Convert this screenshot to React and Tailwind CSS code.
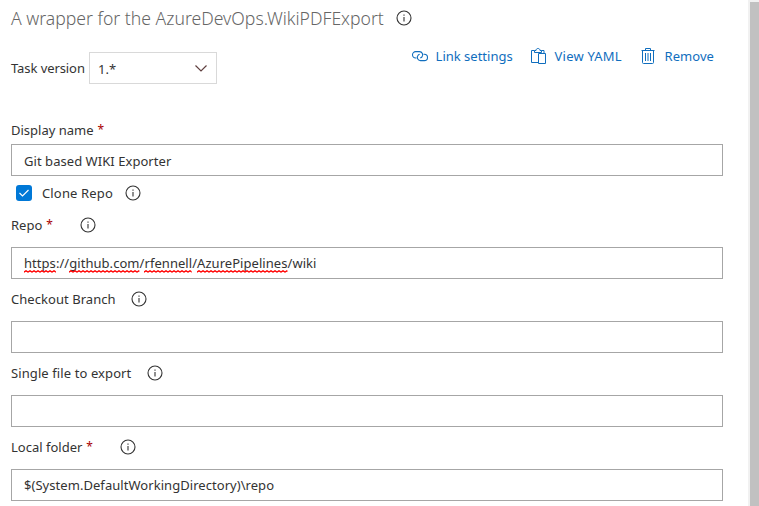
const FONT = "font-['Noto_Sans','Open_Sans',sans-serif]";

function Info({ className = "" }) {
  return (
    <svg className={`shrink-0 ${className}`} width="16" height="16" viewBox="0 0 16 16" fill="none" stroke="#333">
      <circle cx="8" cy="8" r="7" strokeWidth="1.1" />
      <path d="M8 7v4.5M8 4.5v1.2" strokeWidth="1.1" />
    </svg>
  );
}

function LinkIcon() {
  return (
    <svg width="18" height="16" viewBox="0 0 18 16" fill="none" stroke="#106ebe" strokeWidth="1.1">
      <path d="M5.500 10h-.8a3.200 3.200 0 0 1 0-6.400h3.800a3.200 3.200 0 0 1 2.500 5.200q-.6.800-1.700 1.100" />
      <path d="M12.500 6.200h.8a3.200 3.200 0 0 1 0 6.400h-3.800a3.200 3.200 0 0 1-2.500-5.200q.6-.8 1.700-1.100" />
    </svg>
  );
}

function ClipboardIcon() {
  return (
    <svg width="16" height="18" viewBox="0 0 16 18" fill="none" stroke="#106ebe">
      <path d="M7 15.500H.5v-12h3M10.500 3.500h2.500v3M3.500 5.500v-2h1.500c0-2.700 4-2.700 4 0h1.500v2zM7.500 6.500h7v10h-7z" />
    </svg>
  );
}

function TrashIcon() {
  return (
    <svg width="14" height="18" viewBox="0 0 14 18" fill="none" stroke="#106ebe">
      <path d="M.5 3.500h13M4.500 3.500v-2h5v2M1.500 3.500v12q0 1 1 1h9q1 0 1-1v-12M4.500 6v8M7 6v8M9.500 6v8" />
    </svg>
  );
}

function Label({ text, required, tracking = "", gap = "", info = true }) {
  return (
    <div className="flex h-5 items-center">
      <span className={`whitespace-pre ${tracking}`}>{text}</span>
      {required && <span className="ml-1 w-1.5 text-[12px] text-[#a80000]">*</span>}
      {info && <Info className={gap} />}
    </div>
  );
}

function Field({ children }) {
  return (
    <div className="flex h-8 w-[712px] items-center border border-[#a6a6a6] bg-white pl-3 tracking-[0.05px] whitespace-pre">
      {children}
    </div>
  );
}

function Misspelled({ children }) {
  return (
    <span className="relative inline-block">
      {children}
      <svg className="absolute bottom-0 left-0 h-[3px] w-full">
        <defs>
          <pattern id="squiggle" width="4" height="3" patternUnits="userSpaceOnUse">
            <path d="M-1 3L0 2L2 .800L4 2L5 3" fill="none" stroke="#f00" strokeWidth="1.400" />
          </pattern>
        </defs>
        <rect width="100%" height="3" fill="url(#squiggle)" />
      </svg>
    </span>
  );
}

export default function App() {
  return (
    <div className={`flex h-[506px] w-[759px] overflow-hidden bg-white text-[13px] leading-5 text-[#333] ${FONT}`}>
      <main className="flex w-[748px] shrink-0 flex-col pl-[11px]">
        <header className="flex h-9 items-center">
          <h1 className="w-[373px] text-[17.6px] font-light whitespace-pre text-[#666]">A wrapper for the AzureDevOps.WikiPDFExport</h1>
          <Info className="ml-3" />
        </header>
        <div className="flex h-[84px] w-[712px] justify-between">
          <div className="mt-4 flex h-8 items-center">
            <span className="w-[78px] tracking-[-0.08px] whitespace-pre">Task version</span>
            <div className="flex h-8 w-32 items-center justify-between border border-[#d9d9d9] pr-2 pl-2">
              <span className="pt-0.5">1.*</span>
              <svg width="14" height="8" viewBox="0 0 14 8" fill="none" stroke="#604040" strokeWidth="1.2">
                <path d="M1.500 1.500l5.500 5.500 5.500-5.500" />
              </svg>
            </div>
          </div>
          <div className="mt-[10px] flex h-5 items-center pr-[9px] text-[#106ebe]">
            <LinkIcon />
            <span className="ml-[7px] w-[95px]">Link settings</span>
            <ClipboardIcon />
            <span className="ml-2 w-[86px] tracking-[0.2px]">View YAML</span>
            <TrashIcon />
            <span className="ml-[10px] tracking-[0.05px]">Remove</span>
          </div>
        </div>
        <Label text="Display name" required info={false} />
        <div className="mt-1">
          <Field><span className="pt-0.5">Git based WIKI Exporter</span></Field>
        </div>
        <div className="mt-[7px] flex h-5 items-center pl-[5px]">
          <span className="flex size-4 items-center justify-center rounded-[3px] bg-[#0078d7]">
            <svg width="12" height="10" viewBox="0 0 12 10" fill="none" stroke="#fff" strokeWidth="1.1">
              <path d="M1.500 5l3 3 6-6" />
            </svg>
          </span>
          <span className="ml-[10px] tracking-[0.15px]">Clone Repo</span>
          <Info className="ml-3" />
        </div>
        <div className="mt-3">
          <Label text="Repo" required gap="ml-7" />
        </div>
        <div className="mt-3">
          <Field>
            <Misspelled>https</Misspelled>://<Misspelled>github.com</Misspelled>/<Misspelled>rfennell</Misspelled>/<Misspelled>AzurePipelines</Misspelled>/wiki
          </Field>
        </div>
        <div className="mt-[10px]">
          <Label text="Checkout Branch" tracking="tracking-[0.05px]" gap="ml-[15px]" />
        </div>
        <div className="mt-3"><Field /></div>
        <div className="mt-[10px]">
          <Label text="Single file to export" tracking="tracking-[0.1px]" gap="ml-4" />
        </div>
        <div className="mt-3"><Field /></div>
        <div className="mt-[10px]">
          <Label text="Local folder" required gap="ml-7" />
        </div>
        <div className="mt-3">
          <Field>$(System.DefaultWorkingDirectory)\repo</Field>
        </div>
      </main>
      <div className="h-full w-[11px] shrink-0 bg-[#f1f1f1] pt-0.5 pl-0.5">
        <div className="h-full bg-[#c1c1c1]" />
      </div>
    </div>
  );
}
